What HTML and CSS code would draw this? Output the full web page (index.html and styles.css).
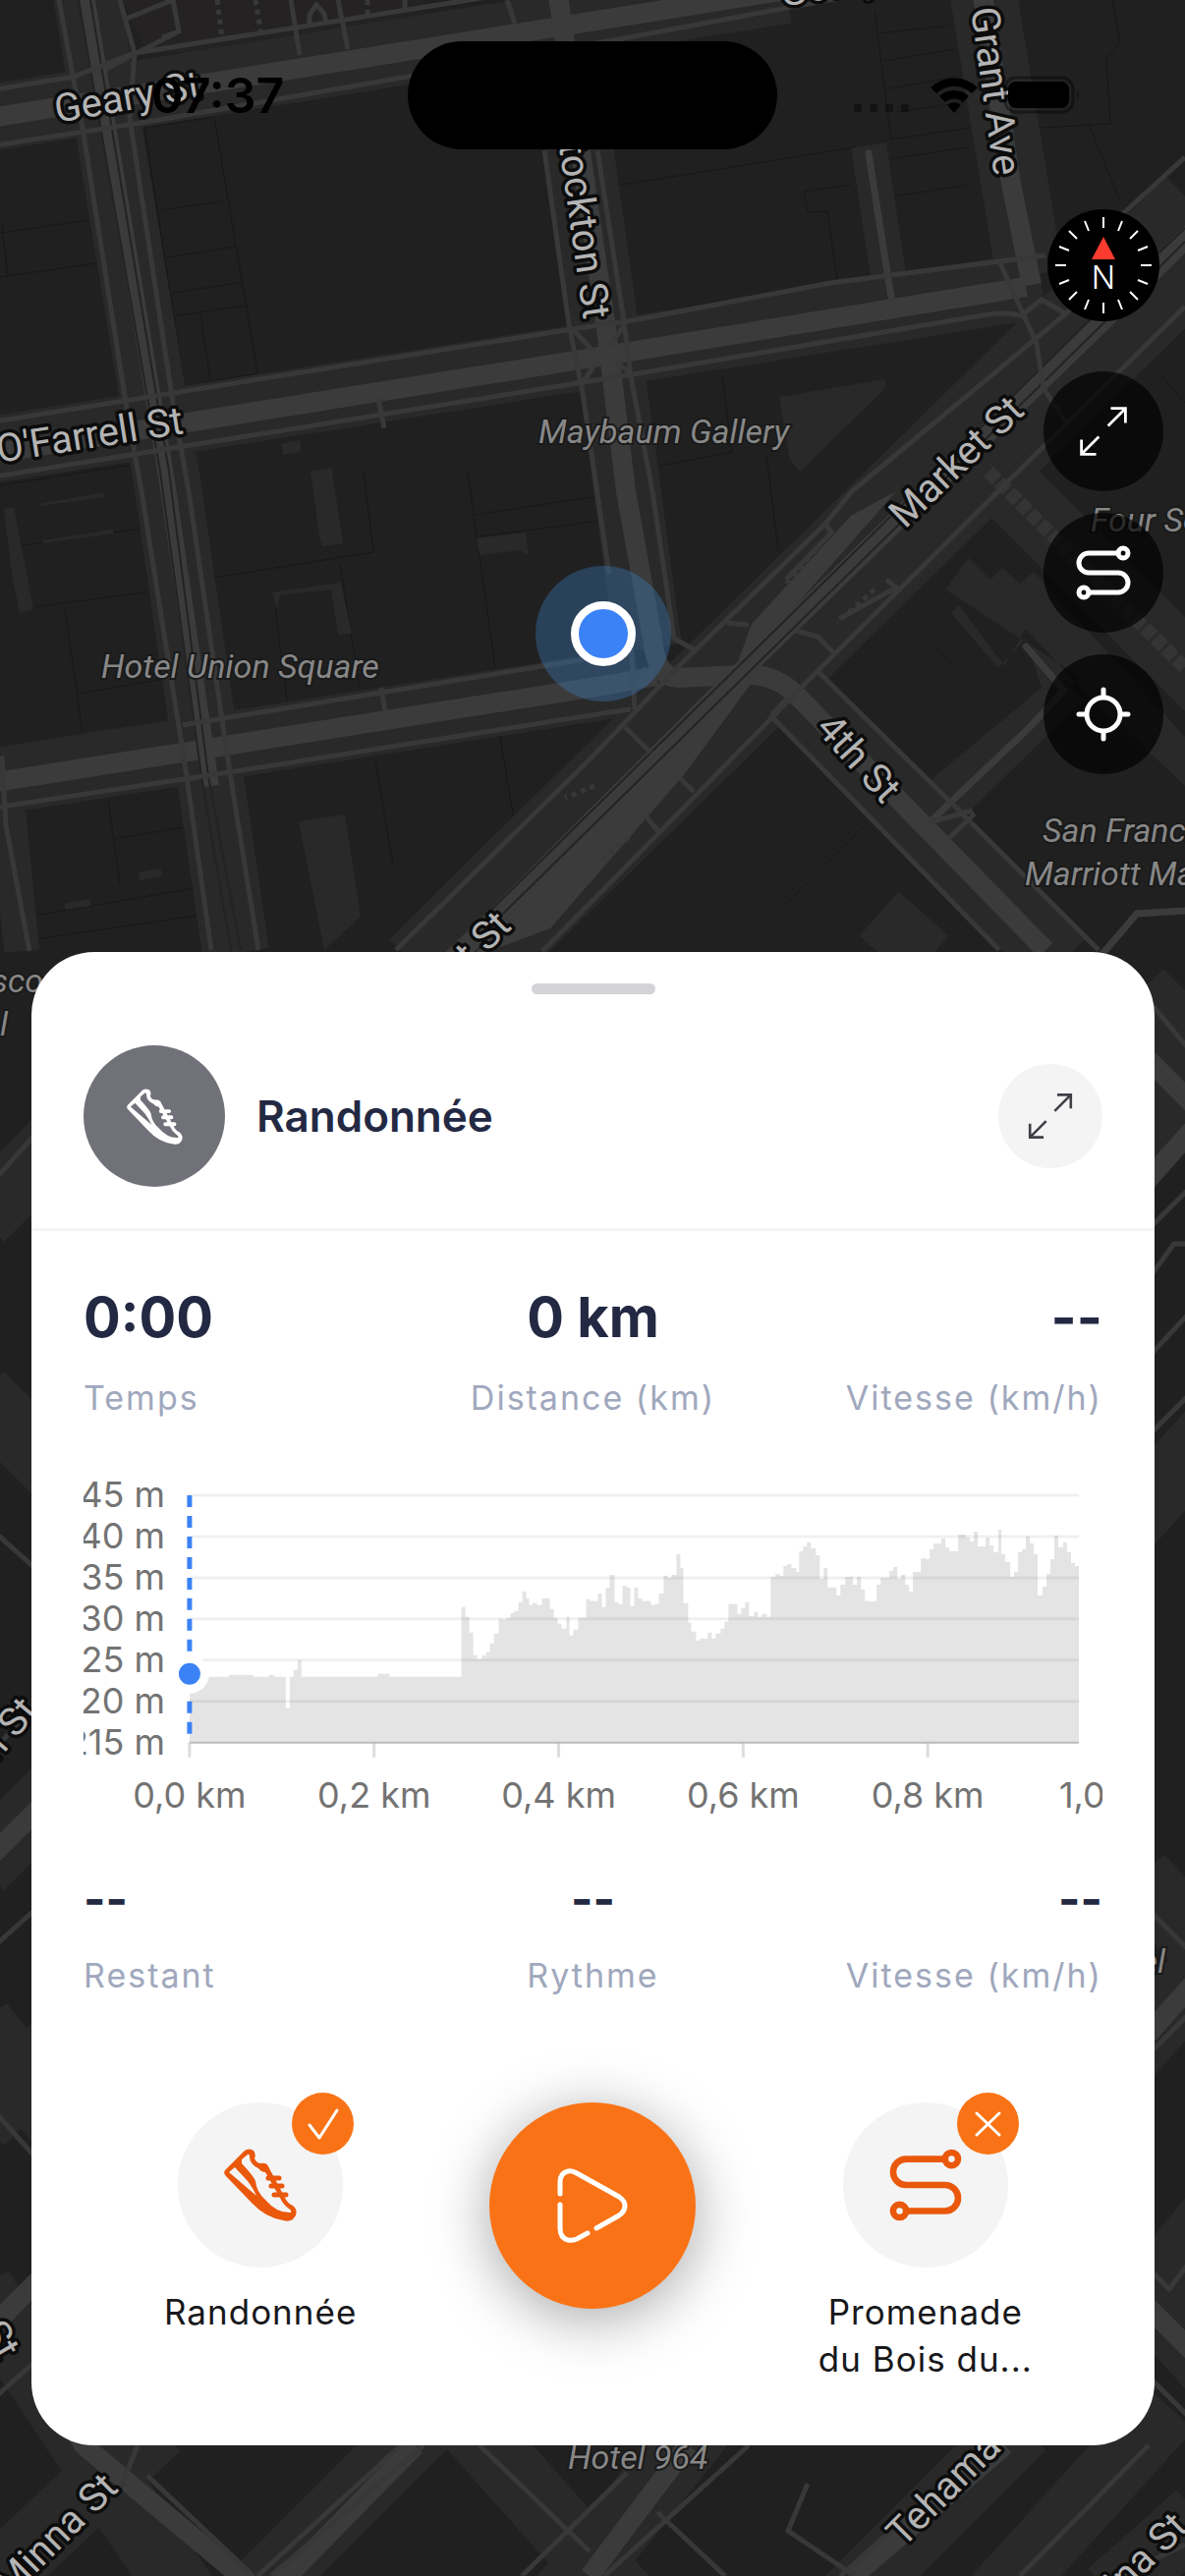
FILE: index.html
```html
<!DOCTYPE html>
<html lang="fr">
<head>
<meta charset="UTF-8">
<meta name="viewport" content="width=device-width, initial-scale=1">
<title>Randonnée</title>
<link rel="stylesheet" href="styles.css">
</head>
<body>
<main class="app">

    <!-- Map background -->
    <svg class="map" viewBox="0 0 1206 2622" preserveAspectRatio="xMidYMin slice" aria-hidden="true">
        <!-- parcels and courtyards -->
        <g class="parcel">
            <path d="M147 130L218 119L262 380L188 393ZM162 214L226 205M170 262L240 251M176 298L248 287M180 321L252 311M204 320L214 388M0 237L90 224M0 282L98 268M2 228L8 280"/>
            <path d="M620 190L870 150M818 195L866 188M818 195L822 216L842 215L852 285M890 12L907 142L1000 128M895 34L966 26M900 62L972 50M905 90L976 78M912 114L980 104M905 162L984 150M910 200L986 188M1132 0L1140 44L1126 60L1130 126L1060 130M1108 126L1140 205"/>
            <path d="M0 494L140 472M18 556L142 538M32 618L156 602M66 620L84 745M80 706L172 690M218 588L380 562L370 480M476 480L504 680M484 524L608 505M488 546L612 530M346 575L366 700M280 618L292 714M382 774L400 880M508 745L524 840M735 384L745 460L672 474M780 462L792 560M110 814L122 900M116 854L186 842M34 932L198 904M36 956L200 932"/>
            <path d="M800 920L880 840M948 656L968 676M1180 380L1206 410"/>
        </g>
        <path class="hall" d="M125 0H430L440 34L150 56Z"/>
        <g class="court">
            <path d="M793 404L900 386Q904 392 898 398L814 480L804 468Z"/>
            <path d="M316 480H338L349 553L328 556Z"/>
            <path d="M304 836L351 829L367 933L330 967Z"/>
            <path d="M4 518L14 516L34 620L20 624L12 584ZM40 513L106 501V506L40 515ZM44 550L115 539V543L44 553Z"/>
            <path d="M277 603L347 593L358 645L344 646L337 600L285 606L282 620ZM485 548L535 542L538 566L530 560L488 565Z"/>
            <path d="M286 452L306 448V460L288 463ZM316 480L338 476V548L326 552ZM141 888L164 884V892L142 896ZM66 920L92 915V922L67 926Z"/>
        </g>
        <path class="block-light" d="M962 600L986 568L1008 590L1020 578L1038 594L1052 582L1206 750V800L1100 700L1044 640L1022 678L976 616L968 624L1016 680L1044 650L1060 700L940 800L965 820L990 800L1100 690Z"/>

        <!-- street casings -->
        <g class="casing">
            <path d="M-10 120L800 -10"/>
            <path d="M88 -5L170 490L240 970"/>
            <path d="M-10 458L610 361L1060 290"/>
            <path d="M568 -5L617 340L660 660"/>
            <path d="M-10 796L650 693"/>
            <path d="M1001 -5L1048 280"/>
            <path class="wide" d="M1230 224L500 940L440 1000"/>
            <path d="M800 700L1080 980"/>
            <path class="narrow" d="M884 148L907 300"/>
            <path class="narrow" d="M946 840L1090 700"/>
            <path d="M1010 480L1230 700"/>
            <path d="M940 930L900 975"/>
            <path class="narrow" d="M2 760L22 968"/>
        </g>

        <!-- roadways -->
        <g class="road">
            <path d="M-10 120L800 -10"/>
            <path class="rail" d="M88 -5L170 490L210 765L215 800"/>
            <path d="M-10 462L610 363L1044 292"/>
            <path d="M568 -5L617 335L637 500L664 650Q668 690 690 690L755 687Q790 684 815 712L1064 967"/>
            <path d="M-10 797L620 697L668 688"/>
            <path d="M1000 -5L1029 187L1050 290"/>
            <path d="M1230 220L1122 327L755 683L500 938L440 996"/>
            <path class="lane" d="M884 156L907 303"/>
            <path class="lane" d="M946 837L1046 742L1083 703L1044 658"/>
            <path class="lane" d="M1110 985L1157 930L1206 927"/>
            <path class="hatch" d="M1006 480L1206 680"/>
        </g>
        <path class="road-fill" d="M765 635L866 525L912 500L745 690ZM600 838L742 690L770 688L695 790L560 945L480 975Z"/>
        <path class="rails" d="M1206 232L1113 322L500 926M1206 246L1126 326L512 930M80 0L163 480L205 790L235 968M92 0L172 480L212 790L245 968"/>

        <!-- pavements and crossings -->
        <g class="path">
            <path d="M-5 148L150 124L415 78L640 38L860 -3M-5 91L75 78L137 54L540 -10M108 70L182 32L176 0M182 32L165 38M137 54L122 0M126 20L176 0"/>
            <path d="M59 -5L84 130L128 410L144 500L190 790L215 967M137 54L132 120L176 410L192 500L233 780L263 967"/>
            <path d="M296 0L305 56M344 0L354 50M315 25V15L322 5L330 14L332 24M516 0L524 24M412 0V12"/>
            <path d="M-5 429L582 335L639 327L845 288L1064 260M-5 485L600 388L650 380L1000 321Q1030 316 1045 324M385 405L391 436"/>
            <path d="M554 153L579 330L593 400L620 585M608 153L635 327L642 383L664 500L686 650L708 662M583 335L604 358M636 330L620 352M594 388L606 370M642 380L626 368"/>
            <path d="M186 738L620 667M-5 822L240 785L620 725L642 722M388 700L392 725M2 770L6 840L30 968"/>
            <path d="M1206 160L1140 220M1120 290L867 500L840 533L689 680L600 773L403 967M1206 312L1029 487L832 683L600 920L552 968M1018 268L1055 350L1062 395L1085 430M1038 322L1060 305L1086 320"/>
            <path d="M784 728L1017 967M832 683L971 820L1118 967M740 634L762 636M810 642L832 648L848 664M946 837L990 825M965 854L992 828M642 650L646 722M636 740L662 766M692 792L706 806M658 832L670 846M640 694L658 680M785 728L802 710"/>
            <path d="M840 533L846 542L800 590M902 590L912 598L854 630"/>
        </g>
        <path class="dots" d="M221 0L226 40M260 0L266 35M374 0V18"/>
        <path class="dots" d="M836 552L800 594M890 600L852 634M605 800L575 812M640 852L612 876"/>

        <!-- strips beside the sheet and below it -->
        <g class="casing">
            <path d="M1160 1010L1260 1110M1240 1060L1140 1180M1240 1450L1140 1560M1240 1990L1140 2100M1160 1910L1240 2000M1160 2330L1260 2440M1240 2250L1140 2370"/>
            <path d="M-20 1240L60 1160M-20 1900L60 1820M-20 2160L60 2080M-20 2060L60 2160M-20 2330L200 2660M-20 1420L60 1500"/>
            <path d="M460 2440L240 2660M720 2460L560 2660M1040 2470L850 2660M480 2470L640 2650M1190 2450L1000 2660M160 2470L-20 2640M1220 2560L1130 2640"/>
        </g>
        <g class="road">
            <path d="M1160 1070L1230 1140M1240 1120L1160 1210M1240 1990L1160 2080M1160 2340L1240 2420M-20 2380L60 2300M-20 1900L50 1830"/>
            <path d="M60 2440L85 2489L254 2630M423 2489L285 2630M700 2489L600 2622M1023 2489L869 2622"/>
        </g>
        <g class="path">
            <path d="M1170 1020L1220 1080M1170 1250L1220 1200M1170 1300L1195 1266H1210M1170 1380L1220 1326M1170 1460L1220 1410M1170 1945L1215 1990M1170 2090L1220 2040M1170 2310L1190 2330L1220 2290M1170 2420L1220 2470"/>
            <path d="M-5 1200L40 1150M-5 1560L40 1600M-5 1780L40 1730M-5 1980L40 1940M-5 2150L40 2200M-5 2440L40 2400"/>
            <path d="M140 2489L120 2540M150 2520L258 2622M408 2489L262 2622M431 2489L276 2622M638 2517L531 2622M762 2489L615 2622M488 2489L600 2597M669 2557L738 2622M822 2528L802 2576L870 2622M1005 2489L855 2622M1169 2489L1038 2622M1206 2590L1140 2622"/>
        </g>

        <!-- labels -->
        <g class="street">
            <text transform="translate(58 125) rotate(-10)">Geary St</text>
            <text transform="translate(188 441) rotate(-9)" text-anchor="end">O'Farrell St</text>
            <text transform="translate(594 326) rotate(82)" text-anchor="end">Stockton St</text>
            <text transform="translate(988 9) rotate(82)">Grant Ave</text>
            <text transform="translate(921 539) rotate(-44)">Market St</text>
            <text transform="translate(829 742) rotate(48)">4th St</text>
            <text transform="translate(522 944) rotate(-45)" text-anchor="end">Market St</text>
            <text transform="translate(796 7) rotate(-10)">Geary St</text>
            <text transform="translate(40 1742) rotate(-50)" text-anchor="end">Mason St</text>
            <text transform="translate(-2 2404) rotate(60)" text-anchor="end">6th St</text>
            <text transform="translate(122 2534) rotate(-45)" text-anchor="end">Minna St</text>
            <text transform="translate(919 2594) rotate(-45)">Tehama St</text>
            <text transform="translate(1211 2574) rotate(-45)" text-anchor="end">Clementina St</text>
        </g>
        <g class="place">
            <text x="548" y="451">Maybaum Gallery</text>
            <text x="103" y="690">Hotel Union Square</text>
            <text x="1110" y="541">Four Seasons</text>
            <text x="1061" y="857">San Francisco</text>
            <text x="1043" y="901">Marriott Marquis</text>
            <text x="44" y="1010" text-anchor="end">San Francisco</text>
            <text x="8" y="1054" text-anchor="end">Hotel</text>
            <text x="1186" y="2008" text-anchor="end">Hotel</text>
            <text x="578" y="2513">Hotel 964</text>
        </g>

        <!-- current position -->
        <circle class="halo" cx="614" cy="645" r="69"/>
        <circle class="here" cx="614" cy="645" r="29"/>
    </svg>

    <header class="status">
        <time class="clock">07:37</time>
        <div class="island"></div>
        <svg class="status-icons" viewBox="0 0 234 40" aria-hidden="true">
            <g class="faint"><rect x="1" y="29" width="8" height="8" rx="2"/><rect x="17" y="29" width="8" height="8" rx="2"/><rect x="33" y="29" width="8" height="8" rx="2"/><rect x="49" y="29" width="8" height="8" rx="2"/></g>
            <path d="M79 12A35 35 0 0 1 127 12L121 18A26 26 0 0 0 85 18ZM88 21A22 22 0 0 1 118 21L112 27A13 13 0 0 0 94 27ZM96 30A10 10 0 0 1 110 30L103 38Z"/>
            <rect class="battery" x="155" y="2" width="69" height="35" rx="11"/>
            <rect x="158" y="6" width="62" height="27" rx="8"/>
            <path class="faint" d="M228 14Q232 19 228 25Z"/>
        </svg>
    </header>

    <nav class="controls" aria-label="Carte">
        <button class="compass" type="button" aria-label="Nord">
            <svg viewBox="0 0 114 114">
                <path class="ticks" d="M57 8V19M57 95V106M8 57H19M95 57H106M38 12L42 22M72 92L76 102M22 22L30 30M84 84L92 92M12 38L22 42M92 72L102 76M76 12L72 22M42 92L38 102M92 22L84 30M30 84L22 92M102 38L92 42M22 72L12 76"/>
                <path class="north" d="M57 28L69 51H45Z"/>
                <text x="57" y="81" text-anchor="middle">N</text>
            </svg>
        </button>
        <button class="round" type="button" aria-label="Agrandir">
            <svg class="icon-expand" viewBox="0 0 60 60"><path d="M35 24L54 5M38 5H54V21M25 36L6 55M22 55H6V39"/></svg>
        </button>
        <button class="round" type="button" aria-label="Parcours">
            <svg class="icon-route" viewBox="0 0 56 56"><path d="M43 8H13A10 10 0 0 0 13 28H43A10 10 0 0 1 43 48H13"/><circle cx="48" cy="8" r="5"/><circle cx="8" cy="48" r="5"/></svg>
        </button>
        <button class="round" type="button" aria-label="Ma position">
            <svg class="icon-route" viewBox="0 0 56 56"><circle cx="28" cy="28" r="17"/><path d="M28 3V10M28 46V53M3 28H10M46 28H53"/></svg>
        </button>
    </nav>

    <section class="sheet">
        <div class="handle"></div>

        <div class="sheet-head">
            <div class="avatar">
                <svg class="icon-shoe" viewBox="0 0 74 74">
                    <path fill-rule="evenodd" d="M1 22L21 2Q25 -1 30 2Q33 6 31 10Q33 15 38 15Q44 14 46 20L62 50Q64 55 70 58Q75 62 73 68L70 72Q66 75 60 73Q42 70 29 56L2 28Q-1 25 1 22ZM5 24L11 19L24 33Q30 41 33 48ZM18 11L24 6Q26 5 26 8Q26 16 35 20Q38 24 42 24L57 50Q60 57 66 61Q69 63 68 65Q54 66 42 52Q33 44 32 33Q30 28 18 15Z"/>
                    <path class="lace" d="M45 30H56M48 38H59M51 47H63"/>
                </svg>
            </div>
            <h1>Randonnée</h1>
            <button class="expand" type="button" aria-label="Agrandir le panneau">
                <svg class="icon-expand" viewBox="0 0 60 60"><path d="M35 24L54 5M38 5H54V21M25 36L6 55M22 55H6V39"/></svg>
            </button>
        </div>

        <dl class="stats">
            <div><dd>0:00</dd><dt>Temps</dt></div>
            <div><dd>0 km</dd><dt>Distance (km)</dt></div>
            <div><dd>--</dd><dt>Vitesse (km/h)</dt></div>
        </dl>

        <!-- Elevation profile -->
        <svg class="chart" viewBox="0 0 1038 350" role="img" aria-label="Profil d'altitude">
            <path class="area" d="M108 275V208H148V206H173V208H189V206H194V208H206V240H210V208H214V201H218V191H222V208H300V205H312V208H385V137H389V147H393V163H397V186H401V190H406V186H410V183H414V174H418V164H423V149H427V150H431V148H435V143H439V141H443V132H447V121H451V128H454V135H457V133H462V135H467V128H475V139H479V148H483V154H487V159H492V147H495V166H499V160H504V148H512V129H516V131H524V123H528V137H532V117H536V104H541V132H545V134H549V115H553V117H557V136H561V117H565V128H569V131H578V135H582V134H586V123H591V105H595V107H599V104H604V83H608V97H611V133H616V153H619V162H624V171H628V169H636V163H640V169H644V164H649V159H653V152H657V134H666V144H670V138H674V132H678V146H683V142H687V147H691V144H696V147H700V106H705V103H709V105H713V95H717V93H721V97H726V101H729V80H733V75H737V71H741V77H746V84H750V108H754V97H758V117H767V125H771V114H776V106H784V114H788V106H792V119H796V131H808V114H812V107H821V100H825V96H829V108H833V104H837V114H841V121H845V101H853V87H858V88H862V78H866V72H874V67H878V76H882V80H891V63H899V66H903V70H907V60H911V75H919V66H923V74H927V81H932V58H935V83H939V91H944V106H948V101H952V81H956V78H960V65H964V72H968V83H972V125H977V116H981V103H985V88H989V64H993V76H998V71H1002V81H1006V92H1010V95H1014V275Z"/>
            <path class="grid" d="M108 23H1014M108 65H1014M108 107H1014M108 149H1014M108 191H1014M108 233H1014"/>
            <path class="tick" d="M108 275V290M296 275V290M484 275V290M672 275V290M860 275V290"/>
            <path class="axis" d="M108 275H1014"/>
            <g class="y-labels">
                <text x="83" y="35">45 m</text>
                <text x="83" y="77">40 m</text>
                <text x="83" y="119">35 m</text>
                <text x="83" y="161">30 m</text>
                <text x="83" y="203">25 m</text>
                <text x="83" y="245">20 m</text>
                <text x="83" y="287">215 m</text>
            </g>
            <g class="x-labels">
                <text x="108" y="341">0,0 km</text>
                <text x="296" y="341">0,2 km</text>
                <text x="484" y="341">0,4 km</text>
                <text x="672" y="341">0,6 km</text>
                <text x="860" y="341">0,8 km</text>
                <text x="1048" y="341">1,0 km</text>
            </g>
            <path class="cursor" d="M108 23V270"/>
            <circle class="cursor-ring" cx="108" cy="205" r="20"/>
            <circle class="cursor-dot" cx="108" cy="205" r="11"/>
        </svg>

        <dl class="stats stats-small">
            <div><dd>--</dd><dt>Restant</dt></div>
            <div><dd>--</dd><dt>Rythme</dt></div>
            <div><dd>--</dd><dt>Vitesse (km/h)</dt></div>
        </dl>

        <div class="actions">
            <button class="action" type="button">
                <span class="disc">
                    <svg class="icon-shoe" viewBox="0 0 74 74">
                        <path fill-rule="evenodd" d="M1 22L21 2Q25 -1 30 2Q33 6 31 10Q33 15 38 15Q44 14 46 20L62 50Q64 55 70 58Q75 62 73 68L70 72Q66 75 60 73Q42 70 29 56L2 28Q-1 25 1 22ZM5 24L11 19L24 33Q30 41 33 48ZM18 11L24 6Q26 5 26 8Q26 16 35 20Q38 24 42 24L57 50Q60 57 66 61Q69 63 68 65Q54 66 42 52Q33 44 32 33Q30 28 18 15Z"/>
                        <path class="lace" d="M45 30H56M48 38H59M51 47H63"/>
                    </svg>
                    <svg class="badge" viewBox="0 0 63 63"><path d="M18 33L28 46L46 18"/></svg>
                </span>
                <span class="action-name">Randonnée</span>
            </button>
            <button class="play" type="button" aria-label="Démarrer">
                <svg viewBox="0 0 72 76"><path d="M3 26V14Q3 5 11 3Q15 2 20 5L63 29Q69 33 69 38Q69 44 63 48L40 61M3 37V61Q3 71 11 73Q15 74 20 72L31 66"/></svg>
            </button>
            <button class="action" type="button">
                <span class="disc">
                    <svg class="icon-route" viewBox="0 0 56 56"><path d="M43 8H13A10 10 0 0 0 13 28H43A10 10 0 0 1 43 48H13"/><circle cx="48" cy="8" r="5"/><circle cx="8" cy="48" r="5"/></svg>
                    <svg class="badge" viewBox="0 0 63 63"><path d="M20 21L43 43M43 21L20 43"/></svg>
                </span>
                <span class="action-name">Promenade du&nbsp;Bois&nbsp;du...</span>
            </button>
        </div>
    </section>
</main>
</body>
</html>
```
FILE: styles.css
```css
* {
    box-sizing: border-box;
}

body {
    margin: 0;
    background: #202020;
    font-family: Inter, "Liberation Sans", sans-serif;
}

button {
    border: 0;
    padding: 0;
    background: none;
    font: inherit;
    color: inherit;
    cursor: pointer;
}

svg {
    display: block;
}

.app {
    position: relative;
    display: flex;
    flex-direction: column;
    min-height: 100vh;
    overflow: hidden;
}

/* Map */
.map {
    position: absolute;
    top: 0;
    left: 0;
    width: 100%;
    height: 100%;
    font-family: Roboto, sans-serif;
    font-size: 40px;
}
.map path {
    fill: none;
}
.map .parcel path {
    stroke: #171717;
    stroke-width: 1;
}
.map .hall {
    fill: #242223;
}
.map .court path,
.map .block-light {
    fill: #292929;
}
.casing path {
    stroke: #292929;
    stroke-width: 68;
}
.casing .wide {
    stroke-width: 124;
}
.casing .narrow {
    stroke-width: 36;
}
.road path {
    stroke: #3b3b3b;
    stroke-width: 20;
}
.road .rail {
    stroke-width: 16;
}
.road .lane {
    stroke-width: 7;
    stroke-linecap: round;
}
.road .hatch {
    stroke: #343434;
    stroke-width: 14;
    stroke-dasharray: 12 3;
}
.map .road-fill {
    fill: #3b3b3b;
}
.map .rails {
    stroke: #232323;
    stroke-width: 2;
}
.map .path path {
    stroke: #383838;
    stroke-width: 5;
}
.map .dots {
    stroke: #383838;
    stroke-width: 5;
    stroke-dasharray: 5 5;
}
.street {
    fill: #b4b4b4;
    stroke: #0c0c0c;
    stroke-width: 7;
    stroke-linejoin: round;
    paint-order: stroke;
}
.place {
    fill: #878787;
    stroke: #1a1a1a;
    stroke-width: 4;
    paint-order: stroke;
    font-size: 34px;
    font-style: italic;
}
.halo {
    fill: #3b82c6;
    opacity: 0.35;
}
.here {
    fill: #3b82f6;
    stroke: #fff;
    stroke-width: 8;
}

/* Status bar */
.status {
    position: relative;
    display: grid;
    grid-template-columns: 1fr 376px 1fr;
    align-items: center;
    justify-items: center;
    padding: 42px 28px 0;
}
.clock {
    font-size: 50px;
    font-weight: 600;
    line-height: 56px;
    color: #000;
}
.island {
    width: 376px;
    height: 110px;
    border-radius: 55px;
    background: #000;
}
.status-icons {
    width: 234px;
    height: 40px;
}
.status-icons .faint {
    opacity: 0.4;
}
.status-icons .battery {
    fill: none;
    stroke: #000;
    stroke-opacity: 0.4;
    stroke-width: 3;
}

/* Map controls */
.controls {
    position: relative;
    display: flex;
    flex-direction: column;
    align-items: center;
    align-self: flex-end;
    gap: 22px;
    margin: 61px 22px 0 0;
}
.compass {
    width: 114px;
    height: 114px;
    margin-bottom: 29px;
    border-radius: 50%;
    background: #000;
}
.compass .ticks {
    stroke: #fff;
    stroke-width: 2;
}
.compass .north {
    fill: #ff3b30;
}
.compass text {
    fill: #fff;
    font-size: 32px;
    font-weight: 300;
}
.round {
    display: grid;
    place-items: center;
    width: 122px;
    height: 122px;
    border-radius: 50%;
    background: rgba(0, 0, 0, 0.68);
    color: #fff;
}

/* Icons */
.icon-expand {
    width: 56px;
    fill: none;
    stroke: currentColor;
    stroke-width: 3;
}
.icon-route {
    width: 56px;
    fill: none;
    stroke: currentColor;
    stroke-width: 5;
    stroke-linecap: round;
}
.icon-shoe {
    width: 57px;
    fill: currentColor;
    overflow: visible;
}
.icon-shoe .lace {
    fill: none;
    stroke: currentColor;
    stroke-width: 5;
    stroke-linecap: round;
}

/* Bottom sheet */
.sheet {
    position: relative;
    margin: auto 31px 133px 32px;
    padding: 32px 0 64px;
    border-radius: 64px;
    background: #fff;
}
.handle {
    width: 126px;
    height: 11px;
    margin: 0 auto;
    border-radius: 6px;
    background: #d4d4d8;
}
.sheet-head {
    display: flex;
    align-items: center;
    gap: 32px;
    padding: 52px 53px 42px;
    border-bottom: 3px solid #f4f4f5;
}
.avatar {
    display: grid;
    place-items: center;
    width: 144px;
    height: 144px;
    border-radius: 50%;
    background: #71717a;
    color: #fff;
}
.sheet-head h1 {
    flex: 1;
    margin: 0;
    font-size: 44px;
    font-weight: 600;
    line-height: 56px;
    color: #232943;
}
.expand {
    display: grid;
    place-items: center;
    width: 106px;
    height: 106px;
    border-radius: 50%;
    background: #f4f4f5;
    color: #3f3f46;
}
.expand .icon-expand {
    width: 52px;
}

.stats {
    display: grid;
    grid-template-columns: 1fr 1fr 1fr;
    margin: 0;
    padding: 56px 53px 0;
    text-align: center;
}
.stats div {
    display: flex;
    flex-direction: column;
    gap: 26px;
}
.stats div:first-child {
    text-align: left;
}
.stats div:last-child {
    text-align: right;
}
.stats dd {
    margin: 0;
    font-size: 56px;
    font-weight: 700;
    line-height: 64px;
    color: #232943;
}
.stats dt {
    font-size: 34px;
    line-height: 48px;
    letter-spacing: 2px;
    color: #a0a8bd;
}
.stats-small dd {
    font-size: 48px;
    line-height: 56px;
}

/* Elevation profile */
.chart {
    width: calc(100% - 106px);
    margin: 52px auto 0;
    overflow: hidden;
    fill: none;
    font-size: 36px;
}
.chart .area {
    fill: #e4e4e4;
}
.chart .grid {
    stroke: #000;
    stroke-opacity: 0.06;
    stroke-width: 3;
}
.chart .tick {
    stroke: #ddd;
    stroke-width: 3;
}
.chart .axis {
    stroke: #bbb;
    stroke-width: 2;
}
.chart text {
    fill: #737373;
}
.y-labels {
    text-anchor: end;
}
.x-labels {
    text-anchor: middle;
}
.cursor {
    stroke: #3b82f6;
    stroke-width: 5;
    stroke-dasharray: 12 9;
}
.cursor-ring {
    fill: #fff;
}
.cursor-dot {
    fill: #3b82f6;
}

/* Actions */
.actions {
    display: grid;
    grid-template-columns: 1fr 1fr 1fr;
    justify-items: center;
    align-items: start;
    padding: 105px 64px 0;
}
.action {
    display: flex;
    flex-direction: column;
    align-items: center;
    gap: 21px;
    width: 240px;
}
.disc {
    position: relative;
    display: grid;
    place-items: center;
    width: 168px;
    height: 168px;
    border-radius: 50%;
    background: #f4f4f5;
    color: #ea580c;
}
.disc .icon-shoe,
.disc .icon-route {
    width: 74px;
}
.badge {
    position: absolute;
    top: -10px;
    right: -11px;
    width: 63px;
    height: 63px;
    border-radius: 50%;
    background: #f97316;
    fill: none;
    stroke: #fff;
    stroke-width: 3;
    stroke-linecap: round;
    stroke-linejoin: round;
}
.action-name {
    font-size: 35px;
    line-height: 48px;
    letter-spacing: 1px;
    color: #18181b;
}
.play {
    display: grid;
    place-items: center;
    width: 210px;
    height: 210px;
    border-radius: 50%;
    background: #f97316;
    box-shadow: 0 10px 60px rgba(0, 0, 0, 0.35);
}
.play svg {
    width: 72px;
    fill: none;
    stroke: #fff;
    stroke-width: 5;
    stroke-linecap: round;
}
```
